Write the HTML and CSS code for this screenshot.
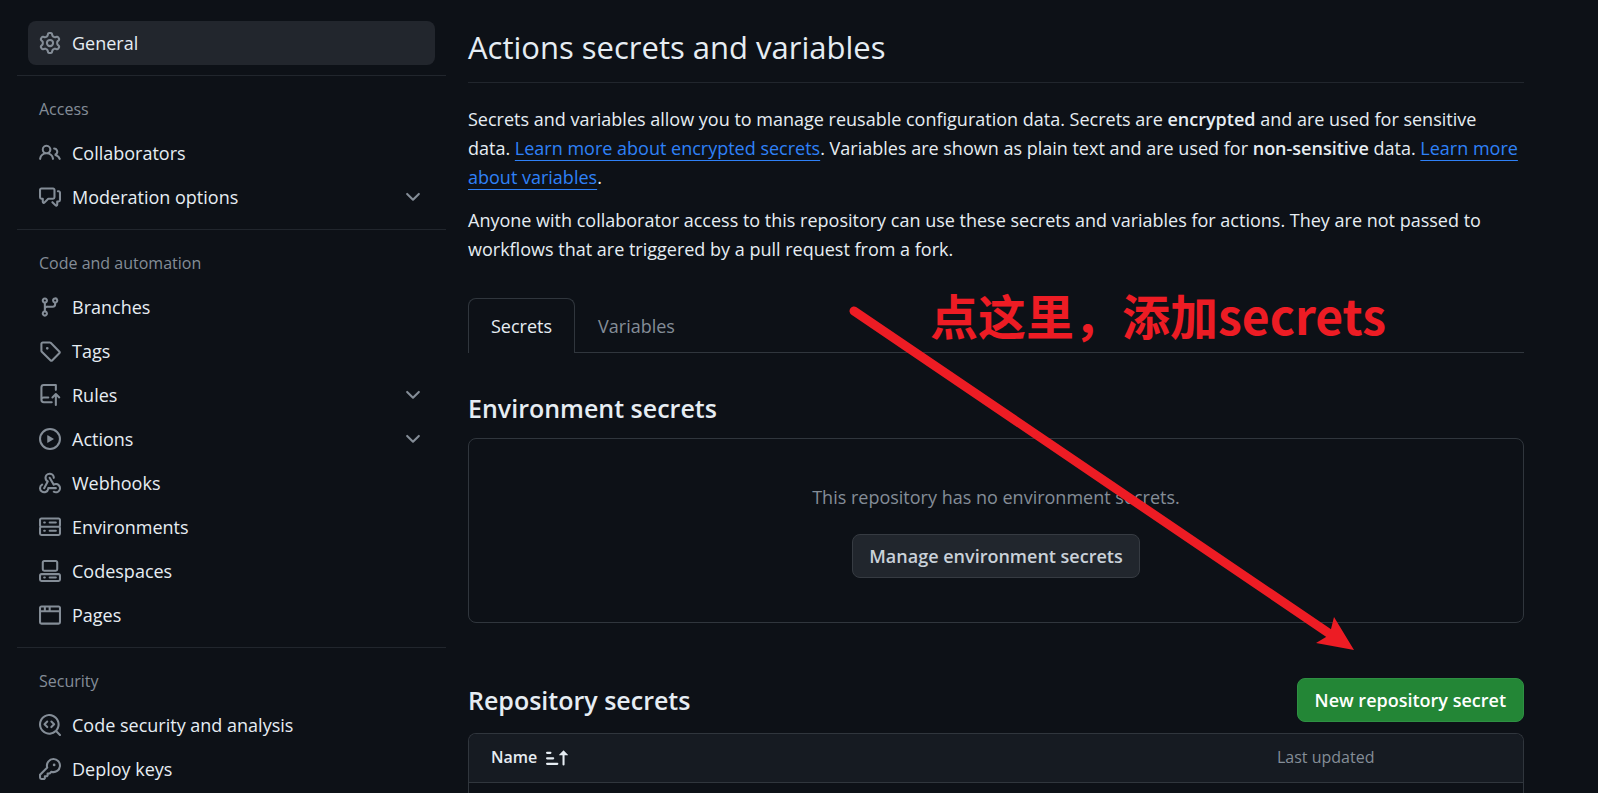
FILE: index.html
```html
<!DOCTYPE html>
<html lang="en">
<head>
<meta charset="utf-8">
<meta name="viewport" content="width=device-width, initial-scale=1">
<title>Actions secrets and variables</title>
<link rel="stylesheet" href="styles.css">
</head>
<body>
<div class="page">
  <nav class="sidebar" aria-label="Repository settings">
    <ul class="nav-list nav-list-top">
      <li><a class="nav-item selected" href="#general" aria-current="page">
        <svg class="icon" viewBox="0 0 16 16" aria-hidden="true"><path d="M8 0a8.2 8.2 0 0 1 .701.031C9.444.095 9.99.645 10.16 1.29l.288 1.107c.018.066.079.158.212.224.231.114.454.243.668.386.123.082.233.09.299.071l1.103-.303c.644-.176 1.392.021 1.82.63.27.385.506.792.704 1.218.315.675.111 1.422-.364 1.891l-.814.806c-.049.048-.098.147-.088.294.016.257.016.515 0 .772-.01.147.038.246.088.294l.814.806c.475.469.679 1.216.364 1.891a7.977 7.977 0 0 1-.704 1.217c-.428.61-1.176.807-1.82.63l-1.102-.302c-.067-.019-.177-.011-.3.071a5.909 5.909 0 0 1-.668.386c-.133.066-.194.158-.211.224l-.29 1.106c-.168.646-.715 1.196-1.458 1.26a8.006 8.006 0 0 1-1.402 0c-.743-.064-1.289-.614-1.458-1.26l-.289-1.106c-.018-.066-.079-.158-.212-.224a5.738 5.738 0 0 1-.668-.386c-.123-.082-.233-.09-.299-.071l-1.103.303c-.644.176-1.392-.021-1.82-.63a8.12 8.12 0 0 1-.704-1.218c-.315-.675-.111-1.422.363-1.891l.815-.806c.05-.048.098-.147.088-.294a6.214 6.214 0 0 1 0-.772c.01-.147-.038-.246-.088-.294l-.815-.806C.635 6.045.431 5.298.746 4.623a7.92 7.92 0 0 1 .704-1.217c.428-.61 1.176-.807 1.82-.63l1.102.302c.067.019.177.011.3-.071.214-.143.437-.272.668-.386.133-.066.194-.158.211-.224l.29-1.106C6.009.645 6.556.095 7.299.03 7.53.01 7.764 0 8 0Zm-.571 1.525c-.036.003-.108.036-.137.146l-.289 1.105c-.147.561-.549.967-.998 1.189-.173.086-.34.183-.5.29-.417.278-.97.423-1.529.27l-1.103-.303c-.109-.03-.175.016-.195.045-.22.312-.412.644-.573.99-.014.031-.021.11.059.19l.815.806c.411.406.562.957.53 1.456a4.709 4.709 0 0 0 0 .582c.032.499-.119 1.05-.53 1.456l-.815.806c-.081.08-.073.159-.059.19.162.346.353.677.573.989.02.03.085.076.195.046l1.102-.303c.56-.153 1.113-.008 1.53.27.161.107.328.204.501.29.447.222.85.629.997 1.189l.289 1.105c.029.109.101.143.137.146a6.6 6.6 0 0 0 1.142 0c.036-.003.108-.036.137-.146l.289-1.105c.147-.561.549-.967.998-1.189.173-.086.34-.183.5-.29.417-.278.97-.423 1.529-.27l1.103.303c.109.029.175-.016.195-.045.22-.313.411-.644.573-.99.014-.031.021-.11-.059-.19l-.815-.806c-.411-.406-.562-.957-.53-1.456a4.709 4.709 0 0 0 0-.582c-.032-.499.119-1.05.53-1.456l.815-.806c.081-.08.073-.159.059-.19a6.464 6.464 0 0 0-.573-.989c-.02-.03-.085-.076-.195-.046l-1.102.303c-.56.153-1.113.008-1.53-.27a4.44 4.44 0 0 0-.501-.29c-.447-.222-.85-.629-.997-1.189l-.289-1.105c-.029-.11-.101-.143-.137-.146a6.6 6.6 0 0 0-1.142 0ZM11 8a3 3 0 1 1-6 0 3 3 0 0 1 6 0ZM9.5 8a1.5 1.5 0 1 0-3.001.001A1.5 1.5 0 0 0 9.5 8Z"/></svg>
        <span>General</span></a></li>
    </ul>

    <section class="nav-group">
      <h2 class="nav-heading">Access</h2>
      <ul class="nav-list">
        <li><a class="nav-item" href="#collaborators">
          <svg class="icon" viewBox="0 0 16 16" aria-hidden="true"><path d="M2 5.5a3.5 3.5 0 1 1 5.898 2.549 5.508 5.508 0 0 1 3.034 4.084.75.75 0 1 1-1.482.235 4 4 0 0 0-7.9 0 .75.75 0 0 1-1.482-.236A5.507 5.507 0 0 1 3.102 8.05 3.493 3.493 0 0 1 2 5.5ZM11 4a3.001 3.001 0 0 1 2.22 5.018 5.01 5.01 0 0 1 2.56 3.012.749.749 0 0 1-.885.954.752.752 0 0 1-.549-.514 3.507 3.507 0 0 0-2.522-2.372.75.75 0 0 1-.574-.73v-.352a.75.75 0 0 1 .416-.672A1.5 1.5 0 0 0 11 5.5.75.75 0 0 1 11 4Zm-5.5-.5a2 2 0 1 0-.001 3.999A2 2 0 0 0 5.5 3.5Z"/></svg>
          <span>Collaborators</span></a></li>
        <li><button class="nav-item" type="button" aria-expanded="false">
          <svg class="icon" viewBox="0 0 16 16" aria-hidden="true"><path d="M1.75 1h8.5c.966 0 1.75.784 1.75 1.75v5.5A1.75 1.75 0 0 1 10.25 10H7.061l-2.574 2.573A1.458 1.458 0 0 1 2 11.543V10h-.25A1.75 1.75 0 0 1 0 8.25v-5.5C0 1.784.784 1 1.75 1ZM1.5 2.75v5.5c0 .138.112.25.25.25h1a.75.75 0 0 1 .75.75v2.19l2.72-2.72a.749.749 0 0 1 .53-.22h3.5a.25.25 0 0 0 .25-.25v-5.5a.25.25 0 0 0-.25-.25h-8.5a.25.25 0 0 0-.25.25Zm13 2a.25.25 0 0 0-.25-.25h-.5a.75.75 0 0 1 0-1.5h.5c.966 0 1.75.784 1.75 1.75v5.5A1.75 1.75 0 0 1 14.25 12H14v1.543a1.458 1.458 0 0 1-2.487 1.03L9.22 12.28a.749.749 0 0 1 .326-1.275.749.749 0 0 1 .734.215l2.22 2.22v-2.19a.75.75 0 0 1 .75-.75h1a.25.25 0 0 0 .25-.25Z"/></svg>
          <span>Moderation options</span>
          <svg class="icon chevron" viewBox="0 0 16 16" aria-hidden="true"><path d="M12.78 5.22a.749.749 0 0 1 0 1.06l-4.25 4.25a.749.749 0 0 1-1.06 0L3.22 6.28a.749.749 0 1 1 1.06-1.06L8 8.939l3.72-3.719a.749.749 0 0 1 1.06 0Z"/></svg></button></li>
      </ul>
    </section>

    <section class="nav-group">
      <h2 class="nav-heading">Code and automation</h2>
      <ul class="nav-list">
        <li><a class="nav-item" href="#branches">
          <svg class="icon" viewBox="0 0 16 16" aria-hidden="true"><path d="M9.5 3.25a2.25 2.25 0 1 1 3 2.122V6A2.5 2.5 0 0 1 10 8.5H6a1 1 0 0 0-1 1v1.128a2.251 2.251 0 1 1-1.5 0V5.372a2.25 2.25 0 1 1 1.5 0v1.836A2.493 2.493 0 0 1 6 7h4a1 1 0 0 0 1-1v-.628A2.25 2.25 0 0 1 9.5 3.25Zm-6 0a.75.75 0 1 0 1.5 0 .75.75 0 0 0-1.5 0Zm8.25-.75a.75.75 0 1 0 0 1.5.75.75 0 0 0 0-1.5ZM4.25 12a.75.75 0 1 0 0 1.5.75.75 0 0 0 0-1.5Z"/></svg>
          <span>Branches</span></a></li>
        <li><a class="nav-item" href="#tags">
          <svg class="icon" viewBox="0 0 16 16" aria-hidden="true"><path d="M1 7.775V2.75C1 1.784 1.784 1 2.75 1h5.025c.464 0 .91.184 1.238.513l6.25 6.25a1.75 1.75 0 0 1 0 2.474l-5.026 5.026a1.75 1.75 0 0 1-2.474 0l-6.25-6.25A1.752 1.752 0 0 1 1 7.775Zm1.5 0c0 .066.026.13.073.177l6.25 6.25a.25.25 0 0 0 .354 0l5.025-5.025a.25.25 0 0 0 0-.354l-6.25-6.25a.25.25 0 0 0-.177-.073H2.75a.25.25 0 0 0-.25.25ZM6 5a1 1 0 1 1 0 2 1 1 0 0 1 0-2Z"/></svg>
          <span>Tags</span></a></li>
        <li><button class="nav-item" type="button" aria-expanded="false">
          <svg class="icon" viewBox="0 0 16 16" aria-hidden="true"><path d="M1 2.5A2.5 2.5 0 0 1 3.5 0h8.75a.75.75 0 0 1 .75.75v3.5a.75.75 0 0 1-1.5 0V1.5h-8a1 1 0 0 0-1 1v6.708A2.493 2.493 0 0 1 3.5 9h3.25a.75.75 0 0 1 0 1.5H3.5a1 1 0 0 0 0 2h5.75a.75.75 0 0 1 0 1.5H3.5A2.5 2.5 0 0 1 1 11.5Zm13.23 7.79h-.001l-1.224-1.224v6.184a.75.75 0 0 1-1.5 0V9.066L10.28 10.29a.75.75 0 0 1-1.06-1.061l2.505-2.504a.75.75 0 0 1 1.06 0L15.29 9.23a.751.751 0 0 1-.018 1.042.751.751 0 0 1-1.042.018Z"/></svg>
          <span>Rules</span>
          <svg class="icon chevron" viewBox="0 0 16 16" aria-hidden="true"><path d="M12.78 5.22a.749.749 0 0 1 0 1.06l-4.25 4.25a.749.749 0 0 1-1.06 0L3.22 6.28a.749.749 0 1 1 1.06-1.06L8 8.939l3.72-3.719a.749.749 0 0 1 1.06 0Z"/></svg></button></li>
        <li><button class="nav-item" type="button" aria-expanded="false">
          <svg class="icon" viewBox="0 0 16 16" aria-hidden="true"><path d="M8 0a8 8 0 1 1 0 16A8 8 0 0 1 8 0ZM1.5 8a6.5 6.5 0 1 0 13 0 6.5 6.5 0 0 0-13 0Zm4.879-2.773 4.264 2.559a.25.25 0 0 1 0 .428l-4.264 2.559A.25.25 0 0 1 6 10.559V5.442a.25.25 0 0 1 .379-.215Z"/></svg>
          <span>Actions</span>
          <svg class="icon chevron" viewBox="0 0 16 16" aria-hidden="true"><path d="M12.78 5.22a.749.749 0 0 1 0 1.06l-4.25 4.25a.749.749 0 0 1-1.06 0L3.22 6.28a.749.749 0 1 1 1.06-1.06L8 8.939l3.72-3.719a.749.749 0 0 1 1.06 0Z"/></svg></button></li>
        <li><a class="nav-item" href="#webhooks">
          <svg class="icon" viewBox="0 0 16 16" aria-hidden="true"><path d="M5.5 4.25a2.25 2.25 0 0 1 4.5 0 .75.75 0 0 0 1.5 0 3.75 3.75 0 1 0-6.14 2.889l-2.272 4.258a.75.75 0 0 0 1.324.706L7 7.25a.75.75 0 0 0-.309-1.015A2.25 2.25 0 0 1 5.5 4.25Z"/><path d="M7.364 3.607a.75.75 0 0 1 1.03.257l2.608 4.349a3.75 3.75 0 1 1-.628 6.785.75.75 0 0 1 .752-1.299 2.25 2.25 0 1 0-.033-3.88.75.75 0 0 1-1.03-.256L7.107 4.636a.75.75 0 0 1 .257-1.03Z"/><path d="M2.9 8.776A.75.75 0 0 1 2.625 9.8 2.25 2.25 0 1 0 6 11.75a.75.75 0 0 1 .75-.751h5.5a.75.75 0 0 1 0 1.5H7.425a3.751 3.751 0 1 1-5.55-3.998.75.75 0 0 1 1.024.274Z"/></svg>
          <span>Webhooks</span></a></li>
        <li><a class="nav-item" href="#environments">
          <svg class="icon" viewBox="0 0 16 16" aria-hidden="true"><path d="M1.75 1h12.5c.966 0 1.75.784 1.75 1.75v4c0 .372-.116.717-.314 1 .198.283.314.628.314 1v4a1.75 1.75 0 0 1-1.75 1.75H1.75A1.75 1.75 0 0 1 0 12.75v-4c0-.358.109-.707.314-1a1.739 1.739 0 0 1-.314-1v-4C0 1.784.784 1 1.75 1ZM1.5 2.75v4c0 .138.112.25.25.25h12.5a.25.25 0 0 0 .25-.25v-4a.25.25 0 0 0-.25-.25H1.75a.25.25 0 0 0-.25.25Zm.25 5.75a.25.25 0 0 0-.25.25v4c0 .138.112.25.25.25h12.5a.25.25 0 0 0 .25-.25v-4a.25.25 0 0 0-.25-.25ZM7 4.75A.75.75 0 0 1 7.75 4h4.5a.75.75 0 0 1 0 1.5h-4.5A.75.75 0 0 1 7 4.75ZM7.75 10h4.5a.75.75 0 0 1 0 1.5h-4.5a.75.75 0 0 1 0-1.5ZM3 4.75A.75.75 0 0 1 3.75 4h.5a.75.75 0 0 1 0 1.5h-.5A.75.75 0 0 1 3 4.75ZM3.75 10h.5a.75.75 0 0 1 0 1.5h-.5a.75.75 0 0 1 0-1.5Z"/></svg>
          <span>Environments</span></a></li>
        <li><a class="nav-item" href="#codespaces">
          <svg class="icon" viewBox="0 0 16 16" aria-hidden="true"><path d="M0 11.25c0-.966.784-1.75 1.75-1.75h12.5c.966 0 1.75.784 1.75 1.75v3A1.75 1.75 0 0 1 14.25 16H1.75A1.75 1.75 0 0 1 0 14.25Zm2-9.5C2 .784 2.784 0 3.75 0h8.5C13.216 0 14 .784 14 1.75v5a1.75 1.75 0 0 1-1.75 1.75h-8.5A1.75 1.75 0 0 1 2 6.75Zm1.75-.25a.25.25 0 0 0-.25.25v5c0 .138.112.25.25.25h8.5a.25.25 0 0 0 .25-.25v-5a.25.25 0 0 0-.25-.25Zm-2 9.5a.25.25 0 0 0-.25.25v3c0 .138.112.25.25.25h12.5a.25.25 0 0 0 .25-.25v-3a.25.25 0 0 0-.25-.25ZM7 12.75a.75.75 0 0 1 .75-.75h4.5a.75.75 0 0 1 0 1.5h-4.5a.75.75 0 0 1-.75-.75Zm-4 0a.75.75 0 0 1 .75-.75h.5a.75.75 0 0 1 0 1.5h-.5a.75.75 0 0 1-.75-.75Z"/></svg>
          <span>Codespaces</span></a></li>
        <li><a class="nav-item" href="#pages">
          <svg class="icon" viewBox="0 0 16 16" aria-hidden="true"><path d="M0 2.75C0 1.784.784 1 1.75 1h12.5c.966 0 1.75.784 1.75 1.75v10.5A1.75 1.75 0 0 1 14.25 15H1.75A1.75 1.75 0 0 1 0 13.25ZM14.5 6h-13v7.25c0 .138.112.25.25.25h12.5a.25.25 0 0 0 .25-.25Zm-6-3.5v2h6V2.75a.25.25 0 0 0-.25-.25ZM5 2.5v2h2v-2Zm-3.25 0a.25.25 0 0 0-.25.25V4.5h2v-2Z"/></svg>
          <span>Pages</span></a></li>
      </ul>
    </section>

    <section class="nav-group">
      <h2 class="nav-heading">Security</h2>
      <ul class="nav-list nav-list-last">
        <li><a class="nav-item" href="#code-security">
          <svg class="icon" viewBox="0 0 16 16" aria-hidden="true"><path d="M8.47 4.97a.75.75 0 0 0 0 1.06L9.94 7.5 8.47 8.97a.75.75 0 1 0 1.06 1.06l2-2a.75.75 0 0 0 0-1.06l-2-2a.75.75 0 0 0-1.06 0ZM6.53 6.03a.75.75 0 0 0-1.06-1.06l-2 2a.75.75 0 0 0 0 1.06l2 2a.75.75 0 1 0 1.06-1.06L5.06 7.5l1.47-1.47Z"/><path d="M12.246 13.307a7.501 7.501 0 1 1 1.06-1.06l2.474 2.473a.749.749 0 1 1-1.06 1.06l-2.474-2.473ZM1.5 7.5a6.002 6.002 0 0 0 3.608 5.504 6.002 6.002 0 0 0 6.486-1.117.748.748 0 0 1 .292-.293A6 6 0 1 0 1.5 7.5Z"/></svg>
          <span>Code security and analysis</span></a></li>
        <li><a class="nav-item" href="#deploy-keys">
          <svg class="icon" viewBox="0 0 16 16" aria-hidden="true"><path d="M10.5 0a5.499 5.499 0 1 1-1.288 10.848l-.932.932a.749.749 0 0 1-.53.22H7v.75a.749.749 0 0 1-.22.53l-.5.5a.749.749 0 0 1-.53.22H5v.75a.749.749 0 0 1-.22.53l-.5.5a.749.749 0 0 1-.53.22h-2A1.75 1.75 0 0 1 0 14.25v-2c0-.199.079-.389.22-.53l4.932-4.932A5.5 5.5 0 0 1 10.5 0Zm-4 5.5c-.001.431.069.86.205 1.269a.75.75 0 0 1-.181.768L1.5 12.56v1.69c0 .138.112.25.25.25h1.69l.06-.06v-1.19a.75.75 0 0 1 .75-.75h1.19l.06-.06v-1.19a.75.75 0 0 1 .75-.75h1.19l1.023-1.025a.75.75 0 0 1 .768-.18A4 4 0 1 0 6.5 5.5ZM11 6a1 1 0 1 1 0-2 1 1 0 0 1 0 2Z"/></svg>
          <span>Deploy keys</span></a></li>
      </ul>
    </section>
  </nav>

  <main class="content">
    <h1 class="title">Actions secrets and variables</h1>
    <p class="intro">Secrets and variables allow you to manage reusable configuration data. Secrets are <strong>encrypted</strong> and are used for sensitive data. <a href="#encrypted-secrets">Learn more about encrypted secrets</a>. Variables are shown as plain text and are used for <strong>non-sensitive</strong> data. <a href="#variables-help">Learn more about variables</a>.</p>
    <p class="intro">Anyone with collaborator access to this repository can use these secrets and variables for actions. They are not passed to workflows that are triggered by a pull request from a fork.</p>

    <nav class="tabs" aria-label="Secrets and variables">
      <a class="tab active" href="#secrets" aria-current="page">Secrets</a>
      <a class="tab" href="#variables">Variables</a>
    </nav>

    <h2 class="section-title">Environment secrets</h2>
    <div class="blank-box">
      <p class="blank-text">This repository has no environment secrets.</p>
      <button class="btn" type="button">Manage environment secrets</button>
    </div>

    <div class="section-bar">
      <h2 class="section-title">Repository secrets</h2>
      <button class="btn btn-primary" type="button">New repository secret</button>
    </div>
    <div class="table-box">
      <table class="secrets-table">
        <thead>
          <tr>
            <th class="col-name" scope="col"><button class="sort" type="button">Name
              <svg class="icon" viewBox="0 0 16 16" aria-hidden="true"><path d="m12.927 2.573 3 3A.25.25 0 0 1 15.75 6H13.5v6.75a.75.75 0 0 1-1.5 0V6H9.75a.25.25 0 0 1-.177-.427l3-3a.25.25 0 0 1 .354 0ZM0 12.25a.75.75 0 0 1 .75-.75h7.5a.75.75 0 0 1 0 1.5H.75a.75.75 0 0 1-.75-.75Zm0-4a.75.75 0 0 1 .75-.75h4.5a.75.75 0 0 1 0 1.5H.75A.75.75 0 0 1 0 8.25Zm0-4a.75.75 0 0 1 .75-.75h2.5a.75.75 0 0 1 0 1.5H.75A.75.75 0 0 1 0 4.25Z"/></svg></button></th>
            <th class="col-updated" scope="col">Last updated</th>
            <td class="col-actions"></td>
          </tr>
        </thead>
      </table>
    </div>
  </main>

  <p class="note">点这里，添加secrets</p>
  <svg class="arrow" width="520" height="360" viewBox="0 0 520 360" aria-hidden="true">
    <line x1="14" y1="11" x2="490" y2="334" stroke="#ed1c24" stroke-width="9" stroke-linecap="round"/>
    <polygon points="514,350 494,317 491,329 486,337 476,343" fill="#ed1c24"/>
  </svg>
</div>
</body>
</html>
```
FILE: styles.css
```css
* {
  box-sizing: border-box;
}

body {
  margin: 0;
  background: #0d1117;
  color: #e6edf3;
  font-family: "Open Sans", "Noto Sans", sans-serif;
  font-size: 18px;
  line-height: 29px;
}

h1, h2, p, ul {
  margin: 0;
  padding: 0;
}

button {
  font: inherit;
  color: inherit;
  cursor: pointer;
}

.page {
  position: relative;
  display: flex;
  gap: 22px;
  min-height: 100vh;
  padding: 0 74px 0 17px;
}

.icon {
  flex: none;
  width: 22px;
  height: 22px;
  fill: #848d97;
}

/* Sidebar */
.sidebar {
  flex: none;
  width: 429px;
  padding-top: 21px;
}

.nav-list {
  list-style: none;
  padding: 0 11px 10px;
}

.nav-list-last {
  padding-bottom: 0;
}

.nav-item {
  display: flex;
  align-items: center;
  gap: 11px;
  width: 100%;
  height: 44px;
  padding: 0 11px;
  border: 0;
  border-radius: 8px;
  background: none;
  color: #e6edf3;
  text-align: left;
  text-decoration: none;
}

.nav-item.selected {
  background: #22262d;
}

.chevron {
  margin-left: auto;
}

.nav-group {
  border-top: 1px solid #21262d;
}

.nav-heading {
  padding: 21px 22px 9px;
  color: #848d97;
  font-size: 16px;
  font-weight: 500;
  line-height: 25px;
}

/* Main column */
.content {
  flex: 1;
  min-width: 0;
  display: flex;
  flex-direction: column;
}

.title {
  margin-bottom: 22px;
  padding: 22px 0 10px;
  border-bottom: 1px solid #21262d;
  font-size: 31px;
  font-weight: 400;
  line-height: 50px;
}

.intro {
  margin-bottom: 14px;
  padding-right: 4px;
}

.intro strong {
  font-weight: 600;
}

.intro a {
  color: #2f81f7;
  text-decoration: underline;
  text-underline-offset: 5px;
}

.tabs {
  display: flex;
  margin-top: 20px;
  border-bottom: 1px solid #30363d;
}

.tab {
  padding: 13px 22px 11px;
  border: 1px solid transparent;
  border-bottom: 0;
  color: #848d97;
  text-decoration: none;
}

.tab.active {
  margin-bottom: -1px;
  padding-bottom: 12px;
  border-color: #30363d;
  border-radius: 8px 8px 0 0;
  background: #0d1117;
  color: #e6edf3;
}

.section-title {
  font-size: 25px;
  font-weight: 600;
  line-height: 40px;
}

.tabs + .section-title {
  margin: 35px 0 10px;
}

.blank-box {
  display: flex;
  flex-direction: column;
  align-items: center;
  gap: 22px;
  padding: 44px 22px;
  border: 1px solid #30363d;
  border-radius: 8px;
}

.blank-text {
  color: #848d97;
}

.btn {
  height: 44px;
  padding: 0 16px;
  border: 1px solid #363b42;
  border-radius: 8px;
  background: #21262d;
  color: #c9d1d9;
  font-weight: 600;
}

.btn-primary {
  padding: 0 17px;
  border-color: #2e9043;
  background: #238636;
  color: #ffffff;
}

.section-bar {
  display: flex;
  align-items: center;
  justify-content: space-between;
  margin: 55px 0 11px;
}

.table-box {
  flex: 1;
  overflow: hidden;
  border: 1px solid #30363d;
  border-bottom: 0;
  border-radius: 8px 8px 0 0;
}

.secrets-table {
  width: 100%;
  border-collapse: collapse;
  table-layout: fixed;
  background: #161b22;
  font-size: 16px;
  line-height: 25px;
}

.secrets-table th,
.secrets-table td {
  height: 48px;
  padding: 0;
  border-bottom: 1px solid #30363d;
  text-align: left;
}

.secrets-table .col-name {
  padding-left: 22px;
}

.col-updated {
  width: 96px;
  color: #848d97;
  font-weight: 500;
  white-space: nowrap;
}

.col-actions {
  width: 150px;
}

.sort {
  display: flex;
  align-items: center;
  gap: 9px;
  padding: 0;
  border: 0;
  background: none;
  font-weight: 600;
}

.sort .icon {
  fill: #e6edf3;
}

/* Hand-drawn pointer over the page */
.note {
  position: absolute;
  top: 279px;
  left: 930px;
  color: #ed1c24;
  font-family: "Noto Sans CJK SC", sans-serif;
  font-size: 48px;
  font-weight: 700;
  line-height: 70px;
  white-space: nowrap;
}

.arrow {
  position: absolute;
  top: 300px;
  left: 840px;
  pointer-events: none;
}
```
